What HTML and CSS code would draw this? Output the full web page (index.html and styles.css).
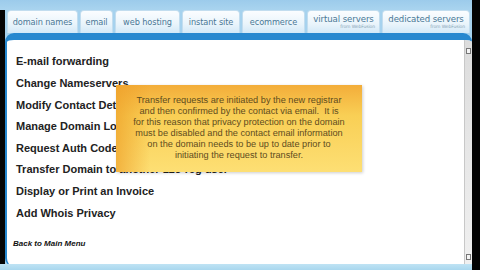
FILE: index.html
```html
<!DOCTYPE html>
<html lang="en">
<head>
    <meta charset="UTF-8">
    <title>Domain Management</title>
    <link rel="stylesheet" href="styles.css">
</head>
<body>
    <div class="screen">
        <div class="site">
            <div class="topbar"></div>
            <div class="middle">
                <div class="edge-left"></div>
                <div class="content">
                    <div class="tabs">
                        <div class="tab t-domain"><span>domain names</span></div>
                        <div class="tab t-email"><span>email</span></div>
                        <div class="tab t-hosting"><span>web hosting</span></div>
                        <div class="tab t-instant"><span>instant site</span></div>
                        <div class="tab t-ecom"><span>ecommerce</span></div>
                        <div class="tab t-virtual two"><span>virtual servers</span><small>from WebFusion</small></div>
                        <div class="tab t-dedicated two"><span>dedicated servers</span><small>from WebFusion</small></div>
                    </div>
                    <div class="panel">
                        <div class="list">
                            <div class="item">E-mail forwarding</div>
                            <div class="item">Change Nameservers</div>
                            <div class="item">Modify Contact Details</div>
                            <div class="item">Manage Domain Locking</div>
                            <div class="item">Request Auth Code</div>
                            <div class="item">Transfer Domain to another 123-reg user</div>
                            <div class="item">Display or Print an Invoice</div>
                            <div class="item">Add Whois Privacy</div>
                            <div class="back">Back to Main Menu</div>
                        </div>
                        <div class="scrollbar">
                            <div class="arrow up"></div>
                            <div class="arrow down"></div>
                        </div>
                    </div>
                </div>
            </div>
            <div class="bottombar"></div>
        </div>
        <div class="edge-right"></div>

        <!-- tooltip over the menu -->
        <div class="tooltip">
            Transfer requests are initiated by the new registrar<br>
            and then confirmed by the contact via email.&nbsp; It is<br>
            for this reason that privacy protection on the domain<br>
            must be disabled and the contact email information<br>
            on the domain needs to be up to date prior to<br>
            initiating the request to transfer.
        </div>
    </div>
</body>
</html>
```

FILE: styles.css
```css
:root {
    --sky: #a6d2ee;
    --bar-blue: #2788cf;
    --tab-text: #4a7896;
}
body {
    margin: 0;
    font-family: "Liberation Sans", Arial, sans-serif;
    background: #000;
}
.screen {
    position: relative;
    display: flex;
    width: 480px;
    height: 270px;
    overflow: hidden;
}
.site {
    width: 472px;
    display: flex;
    flex-direction: column;
    background: var(--sky);
}
.topbar {
    height: 10px;
    background: linear-gradient(#9ccbeb, #a9d4ef);
}
.middle {
    display: flex;
    height: 254px;
}
.edge-left {
    width: 5px;
    background: #050505;
}
.content {
    flex: 1;
    display: flex;
    flex-direction: column;
}
.tabs {
    display: flex;
    gap: 2px;
    height: 23px;
    padding-left: 2px;
}
.tab {
    display: flex;
    flex-direction: column;
    align-items: center;
    justify-content: center;
    box-sizing: border-box;
    background: linear-gradient(#fbfdff, #e9f4fb 60%, #d3e9f7);
    border: 1px solid #c2ddef;
    border-bottom: none;
    border-radius: 4px 4px 0 0;
    color: var(--tab-text);
    font-family: "DejaVu Sans", Verdana, sans-serif;
    font-size: 8.2px;
    letter-spacing: -0.1px;
}
.tab.two {
    justify-content: flex-start;
    padding-top: 3px;
}
.tab.two span {
    font-size: 8.6px;
}
.tab small {
    align-self: flex-end;
    margin-right: 4px;
    font-size: 4.5px;
    color: #8aa6b8;
}
.t-domain { width: 71px; }
.t-email { width: 33px; }
.t-hosting { width: 65px; }
.t-instant { width: 58px; }
.t-ecom { width: 63px; }
.t-virtual { width: 73px; }
.t-dedicated { width: 88px; }
.panel {
    flex: 1;
    display: flex;
    background: #fff;
    border-top: 7px solid var(--bar-blue);
    border-left: 2px solid var(--bar-blue);
    border-radius: 9px 9px 0 8px;
    margin-bottom: -2px;
    overflow: hidden;
}
.list {
    flex: 1;
    padding: 11.4px 0 0 9px;
}
.item {
    font-size: 11px;
    font-weight: bold;
    line-height: 21.6px;
    color: #222;
}
.back {
    margin: 14.7px 0 0 -3px;
    font-size: 8px;
    line-height: 10px;
    font-weight: bold;
    font-style: italic;
    color: #111;
}
.scrollbar {
    width: 7px;
    display: flex;
    flex-direction: column;
    justify-content: space-between;
    padding: 8px 0 6px;
    background: linear-gradient(#dcdcdc, #e6e6e6 45%, #f0f0f0);
    border-left: 1px solid #c8c8c8;
}
.arrow {
    height: 6px;
    margin: 0 1px;
    border: 1px solid #777;
    background: #f4f4f4;
    box-sizing: border-box;
}
.bottombar {
    flex: 1;
    background: linear-gradient(#bfe3f4, #a9d7ee);
}
.edge-right {
    flex: 1;
    background: #030303;
}
.tooltip {
    position: absolute;
    left: 116px;
    top: 85px;
    width: 246px;
    height: 87px;
    box-sizing: border-box;
    padding-top: 10px;
    text-align: center;
    font-size: 9.2px;
    line-height: 11px;
    color: #5e4c1e;
    background:
        linear-gradient(to right, rgba(238, 160, 40, 0.7), rgba(238, 160, 40, 0) 14%),
        linear-gradient(#f3ad3a, #f9cf55 35%, #fddf74);
    box-shadow: 1px 1px 3px rgba(0, 0, 0, 0.2);
}
```
